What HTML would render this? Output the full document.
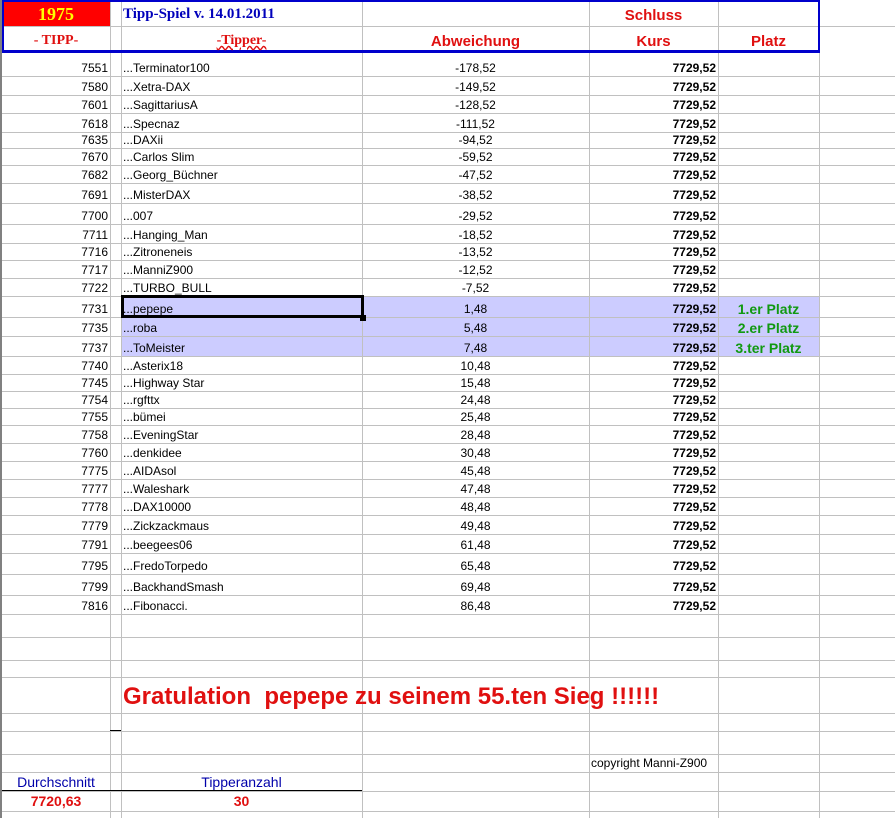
<!DOCTYPE html>
<html><head><meta charset="utf-8"><style>
*{margin:0;padding:0;box-sizing:border-box}
body{width:895px;height:818px;background:#fff;position:relative;overflow:hidden;font-family:"Liberation Sans",Arial,sans-serif;font-size:12px;color:#000}
.h{position:absolute;left:0;width:895px;height:1px;background:#c0c0c0}
.v{position:absolute;top:0;height:818px;width:1px;background:#c0c0c0}
.r{position:absolute;left:0;width:895px;display:flex;align-items:flex-end}
.r span{position:absolute;bottom:1px;white-space:nowrap;line-height:14px}
.a{left:2px;width:106px;text-align:right}
.b{left:123px}
.c{left:362px;width:227px;text-align:center}
.d{left:589px;width:127px;text-align:right;font-weight:bold}
.e{left:718px;width:101px;text-align:center;color:#119911;font-weight:bold;font-size:14px}
.hl{position:absolute;left:121px;width:698px;background:#ccccff}
.red{color:#e01010;font-weight:bold}
</style></head><body>
<div class="hl" style="top:296px;height:60px"></div>
<div style="position:absolute;left:2px;top:2px;width:108px;height:24px;background:#ff0000"></div>

<div class="h" style="top:26px"></div>
<div class="h" style="top:76px"></div><div class="h" style="top:95px"></div><div class="h" style="top:113px"></div><div class="h" style="top:132px"></div><div class="h" style="top:148px"></div><div class="h" style="top:165px"></div><div class="h" style="top:183px"></div><div class="h" style="top:203px"></div><div class="h" style="top:224px"></div><div class="h" style="top:243px"></div><div class="h" style="top:260px"></div><div class="h" style="top:278px"></div><div class="h" style="top:296px"></div><div class="h" style="top:317px"></div><div class="h" style="top:336px"></div><div class="h" style="top:356px"></div><div class="h" style="top:374px"></div><div class="h" style="top:391px"></div><div class="h" style="top:408px"></div><div class="h" style="top:425px"></div><div class="h" style="top:443px"></div><div class="h" style="top:461px"></div><div class="h" style="top:479px"></div><div class="h" style="top:497px"></div><div class="h" style="top:515px"></div><div class="h" style="top:534px"></div><div class="h" style="top:553px"></div><div class="h" style="top:574px"></div><div class="h" style="top:595px"></div><div class="h" style="top:614px"></div><div class="h" style="top:637px"></div><div class="h" style="top:660px"></div><div class="h" style="top:677px"></div><div class="h" style="top:713px"></div><div class="h" style="top:731px"></div><div class="h" style="top:754px"></div><div class="h" style="top:772px"></div><div class="h" style="top:791px"></div><div class="h" style="top:811px"></div>

<div class="v" style="left:110px"></div><div class="v" style="left:121px"></div><div class="v" style="left:362px"></div><div class="v" style="left:589px"></div><div class="v" style="left:718px"></div><div class="v" style="left:819px"></div>
<div style="position:absolute;left:0;top:0;width:2px;height:818px;background:#808080"></div>

<div style="position:absolute;left:2px;top:0;width:818px;height:53px;border:2px solid #0000cc;border-bottom-width:3px"></div>
<div style="position:absolute;left:2px;top:790px;width:360px;height:1px;background:#000"></div>
<div style="position:absolute;left:110px;top:730px;width:11px;height:1px;background:#000"></div>

<div style="position:absolute;left:2px;top:2px;width:108px;height:24px;text-align:center;line-height:24px;font-family:'Liberation Serif',serif;font-weight:bold;font-size:18px;color:#ffff00">1975</div>
<div style="position:absolute;left:123px;top:6px;font-family:'Liberation Serif',serif;font-weight:bold;font-size:15px;color:#0000bb">Tipp-Spiel v. 14.01.2011</div>
<div style="position:absolute;left:589px;top:7px;width:129px;text-align:center;font-size:15px" class="red">Schluss</div>
<div style="position:absolute;left:2px;top:33px;width:108px;text-align:center;font-family:'Liberation Serif',serif;font-size:14px" class="red">- TIPP-</div>
<div style="position:absolute;left:121px;top:33px;width:241px;text-align:center;font-family:'Liberation Serif',serif;font-size:14px;text-decoration:underline wavy #e01010" class="red">-Tipper-</div>
<div style="position:absolute;left:362px;top:33px;width:227px;text-align:center;font-size:15px" class="red">Abweichung</div>
<div style="position:absolute;left:589px;top:33px;width:129px;text-align:center;font-size:15px" class="red">Kurs</div>
<div style="position:absolute;left:718px;top:33px;width:101px;text-align:center;font-size:15px" class="red">Platz</div>

<div class="r" style="top:52px;height:24px"><span class="a">7551</span><span class="b">...Terminator100</span><span class="c">-178,52</span><span class="d">7729,52</span></div>
<div class="r" style="top:76px;height:19px"><span class="a">7580</span><span class="b">...Xetra-DAX</span><span class="c">-149,52</span><span class="d">7729,52</span></div>
<div class="r" style="top:95px;height:18px"><span class="a">7601</span><span class="b">...SagittariusA</span><span class="c">-128,52</span><span class="d">7729,52</span></div>
<div class="r" style="top:113px;height:19px"><span class="a">7618</span><span class="b">...Specnaz</span><span class="c">-111,52</span><span class="d">7729,52</span></div>
<div class="r" style="top:132px;height:16px"><span class="a">7635</span><span class="b">...DAXii</span><span class="c">-94,52</span><span class="d">7729,52</span></div>
<div class="r" style="top:148px;height:17px"><span class="a">7670</span><span class="b">...Carlos Slim</span><span class="c">-59,52</span><span class="d">7729,52</span></div>
<div class="r" style="top:165px;height:18px"><span class="a">7682</span><span class="b">...Georg_Büchner</span><span class="c">-47,52</span><span class="d">7729,52</span></div>
<div class="r" style="top:183px;height:20px"><span class="a">7691</span><span class="b">...MisterDAX</span><span class="c">-38,52</span><span class="d">7729,52</span></div>
<div class="r" style="top:203px;height:21px"><span class="a">7700</span><span class="b">...007</span><span class="c">-29,52</span><span class="d">7729,52</span></div>
<div class="r" style="top:224px;height:19px"><span class="a">7711</span><span class="b">...Hanging_Man</span><span class="c">-18,52</span><span class="d">7729,52</span></div>
<div class="r" style="top:243px;height:17px"><span class="a">7716</span><span class="b">...Zitroneneis</span><span class="c">-13,52</span><span class="d">7729,52</span></div>
<div class="r" style="top:260px;height:18px"><span class="a">7717</span><span class="b">...ManniZ900</span><span class="c">-12,52</span><span class="d">7729,52</span></div>
<div class="r" style="top:278px;height:18px"><span class="a">7722</span><span class="b">...TURBO_BULL</span><span class="c">-7,52</span><span class="d">7729,52</span></div>
<div class="r" style="top:296px;height:21px"><span class="a">7731</span><span class="b">...pepepe</span><span class="c">1,48</span><span class="d">7729,52</span><span class="e">1.er Platz</span></div>
<div class="r" style="top:317px;height:19px"><span class="a">7735</span><span class="b">...roba</span><span class="c">5,48</span><span class="d">7729,52</span><span class="e">2.er Platz</span></div>
<div class="r" style="top:336px;height:20px"><span class="a">7737</span><span class="b">...ToMeister</span><span class="c">7,48</span><span class="d">7729,52</span><span class="e">3.ter Platz</span></div>
<div class="r" style="top:356px;height:18px"><span class="a">7740</span><span class="b">...Asterix18</span><span class="c">10,48</span><span class="d">7729,52</span></div>
<div class="r" style="top:374px;height:17px"><span class="a">7745</span><span class="b">...Highway Star</span><span class="c">15,48</span><span class="d">7729,52</span></div>
<div class="r" style="top:391px;height:17px"><span class="a">7754</span><span class="b">...rgfttx</span><span class="c">24,48</span><span class="d">7729,52</span></div>
<div class="r" style="top:408px;height:17px"><span class="a">7755</span><span class="b">...bümei</span><span class="c">25,48</span><span class="d">7729,52</span></div>
<div class="r" style="top:425px;height:18px"><span class="a">7758</span><span class="b">...EveningStar</span><span class="c">28,48</span><span class="d">7729,52</span></div>
<div class="r" style="top:443px;height:18px"><span class="a">7760</span><span class="b">...denkidee</span><span class="c">30,48</span><span class="d">7729,52</span></div>
<div class="r" style="top:461px;height:18px"><span class="a">7775</span><span class="b">...AIDAsol</span><span class="c">45,48</span><span class="d">7729,52</span></div>
<div class="r" style="top:479px;height:18px"><span class="a">7777</span><span class="b">...Waleshark</span><span class="c">47,48</span><span class="d">7729,52</span></div>
<div class="r" style="top:497px;height:18px"><span class="a">7778</span><span class="b">...DAX10000</span><span class="c">48,48</span><span class="d">7729,52</span></div>
<div class="r" style="top:515px;height:19px"><span class="a">7779</span><span class="b">...Zickzackmaus</span><span class="c">49,48</span><span class="d">7729,52</span></div>
<div class="r" style="top:534px;height:19px"><span class="a">7791</span><span class="b">...beegees06</span><span class="c">61,48</span><span class="d">7729,52</span></div>
<div class="r" style="top:553px;height:21px"><span class="a">7795</span><span class="b">...FredoTorpedo</span><span class="c">65,48</span><span class="d">7729,52</span></div>
<div class="r" style="top:574px;height:21px"><span class="a">7799</span><span class="b">...BackhandSmash</span><span class="c">69,48</span><span class="d">7729,52</span></div>
<div class="r" style="top:595px;height:19px"><span class="a">7816</span><span class="b">...Fibonacci.</span><span class="c">86,48</span><span class="d">7729,52</span></div>

<div style="position:absolute;left:121px;top:295px;width:243px;height:23px;border:3px solid #000"></div>
<div style="position:absolute;left:360px;top:315px;width:6px;height:6px;background:#000"></div>

<div style="position:absolute;left:123px;top:683px;font-size:24px;font-weight:bold;color:#e01010;white-space:pre">Gratulation  pepepe zu seinem 55.ten Sieg !!!!!!</div>
<div style="position:absolute;left:591px;top:756px;font-size:12px">copyright Manni-Z900</div>
<div style="position:absolute;left:2px;top:774px;width:108px;text-align:center;font-size:14px;color:#0000aa">Durchschnitt</div>
<div style="position:absolute;left:121px;top:774px;width:241px;text-align:center;font-size:14px;color:#0000aa">Tipperanzahl</div>
<div style="position:absolute;left:2px;top:793px;width:108px;text-align:center;font-size:14px" class="red">7720,63</div>
<div style="position:absolute;left:121px;top:793px;width:241px;text-align:center;font-size:14px" class="red">30</div>
</body></html>
